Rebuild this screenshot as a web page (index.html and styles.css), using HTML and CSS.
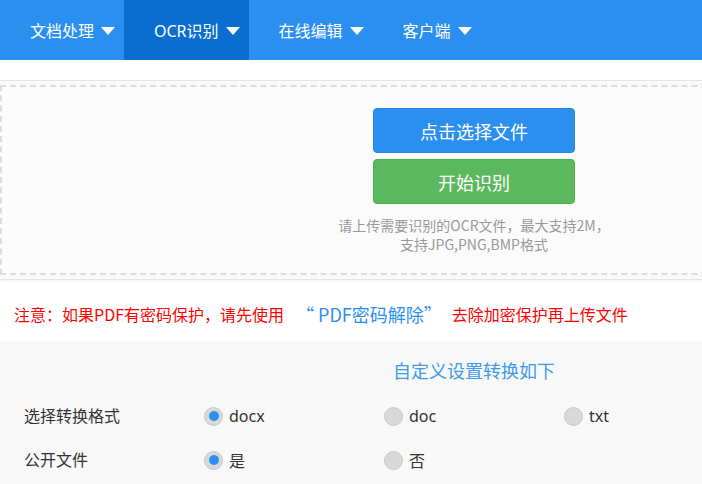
FILE: index.html
```html
<!DOCTYPE html>
<html lang="zh-CN">
<head>
<meta charset="utf-8">
<title>OCR识别</title>
<link rel="stylesheet" href="styles.css">
</head>
<body>
<div class="page">
  <nav class="nav">
    <a class="nav-item">文档处理<span class="caret"></span></a>
    <a class="nav-item active">OCR识别<span class="caret"></span></a>
    <a class="nav-item">在线编辑<span class="caret"></span></a>
    <a class="nav-item">客户端<span class="caret"></span></a>
  </nav>

  <div class="upload">
    <div class="dropzone">
      <button class="btn btn-blue">点击选择文件</button>
      <button class="btn btn-green">开始识别</button>
      <p class="hint">请上传需要识别的OCR文件，最大支持2M，<br>支持JPG,PNG,BMP格式</p>
    </div>
  </div>

  <p class="notice">注意：如果PDF有密码保护，请先使用<a class="notice-link">“ PDF密码解除”</a>去除加密保护再上传文件</p>

  <section class="settings">
    <h2 class="settings-title">自定义设置转换如下</h2>
    <div class="settings-grid">
      <div class="label">选择转换格式</div>
      <div class="option"><span class="radio checked"></span>docx</div>
      <div class="option"><span class="radio"></span>doc</div>
      <div class="option"><span class="radio"></span>txt</div>
      <div class="label">公开文件</div>
      <div class="option"><span class="radio checked"></span>是</div>
      <div class="option"><span class="radio"></span>否</div>
      <div class="option"></div>
    </div>
  </section>
</div>
</body>
</html>
```

FILE: styles.css
```css
html, body {
  margin: 0;
  padding: 0;
  overflow: hidden;
  background: #ffffff;
}
body {
  font-family: "Noto Sans", "Noto Sans CJK SC", sans-serif;
  color: #333;
}
.page {
  width: 948px;
}
.nav {
  display: flex;
  height: 60px;
  background: #2b8ff0;
}
.nav-item {
  display: flex;
  align-items: center;
  padding: 0 9px 0 30px;
  color: #fff;
  font-size: 16px;
  font-family: "Noto Sans", "Noto Sans CJK SC", sans-serif;
}
.nav-item.active {
  background: #0a6ecf;
}
.caret {
  width: 0;
  height: 0;
  margin-left: 7px;
  margin-top: 1px;
  border-left: 7px solid transparent;
  border-right: 7px solid transparent;
  border-top: 8px solid #fff;
}
.upload {
  margin: 20px 0 0 -5px;
  width: 958px;
  box-sizing: border-box;
  border: 1px solid #e3e3e3;
  border-radius: 6px;
  padding: 4px;
  background: #fbfbfb;
  box-shadow: 0 1px 3px rgba(0,0,0,0.06);
}
.dropzone {
  border: 2px dashed #dcdcdc;
  border-radius: 2px;
  padding: 21px 0 19px;
  display: flex;
  flex-direction: column;
  align-items: center;
}
.btn {
  width: 202px;
  height: 45px;
  border-radius: 4px;
  color: #fff;
  font-size: 18px;
  font-family: "Noto Sans CJK SC", sans-serif;
  padding: 0;
  cursor: pointer;
}
.btn-blue {
  background: #2b8ff0;
  border: 1px solid #2585e4;
}
.btn-green {
  background: #5cb85c;
  border: 1px solid #4cae4c;
  margin-top: 6px;
}
.hint {
  margin: 12px 0 0;
  font-size: 14px;
  line-height: 19px;
  color: #999;
  text-align: center;
  font-family: "Noto Sans CJK SC", sans-serif;
}
.notice {
  margin: 14px 0 7px 14px;
  height: 40px;
  display: flex;
  align-items: center;
  font-size: 16px;
  color: #ff0000;
  font-family: "Noto Sans CJK SC", sans-serif;
}
.notice-link {
  color: #2b8ff0;
  font-size: 18px;
  margin: 0 10px 0 12px;
}
.settings {
  background: #f8f8f8;
  padding: 17px 0 10px 24px;
  min-height: 200px;
}
.settings-title {
  margin: 0 0 12px;
  text-align: center;
  font-weight: normal;
  font-size: 18px;
  line-height: 24px;
  color: #3d9be9;
  padding-right: 24px;
  font-family: "Noto Sans CJK SC", sans-serif;
}
.settings-grid {
  display: grid;
  grid-template-columns: 180px 180px 180px 180px;
  grid-auto-rows: 44px;
}
.label {
  display: flex;
  align-items: center;
  font-size: 16px;
  color: #333;
  font-family: "Noto Sans CJK SC", sans-serif;
  padding-bottom: 2px;
}
.option {
  display: flex;
  align-items: center;
  font-size: 16px;
  color: #333;
  font-family: "Noto Sans", "Noto Sans CJK SC", sans-serif;
}
.radio {
  width: 19px;
  height: 19px;
  box-sizing: border-box;
  border-radius: 50%;
  background: #d9d9d9;
  border: 1px solid #c9c9c9;
  margin-right: 6px;
  display: flex;
  align-items: center;
  justify-content: center;
}
.radio.checked::after {
  content: "";
  width: 10px;
  height: 10px;
  border-radius: 50%;
  background: #2b8ff0;
}
```
